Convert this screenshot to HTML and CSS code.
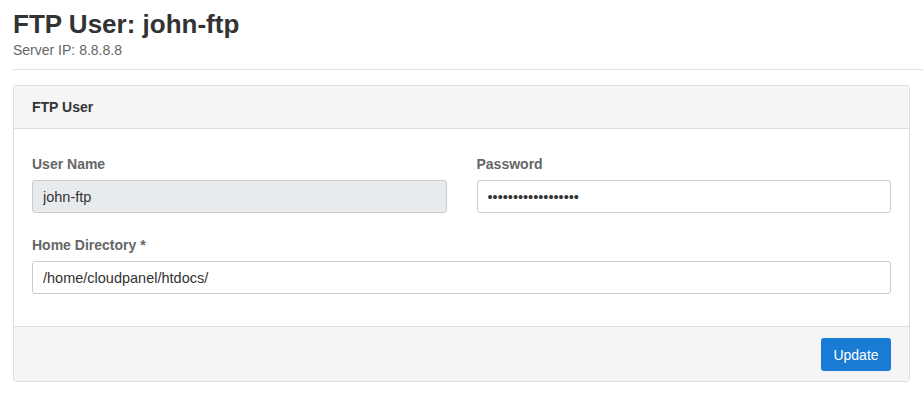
FILE: index.html
```html
<!DOCTYPE html>
<html lang="en">

<head>
    <meta charset="UTF-8">
    <meta name="viewport" content="width=device-width, initial-scale=1.0">
    <title>FTP User: john-ftp</title>
    <link rel="stylesheet" href="styles.css">
</head>

<body>
    <!-- Page Header -->
    <header class="page-header">
        <h1>FTP User: john-ftp</h1>
        <div class="subtitle">Server IP: 8.8.8.8</div>
    </header>

    <!-- FTP User Card -->
    <form class="card">
        <div class="card-header">FTP User</div>

        <div class="card-body">
            <div class="form-row">
                <div class="form-group">
                    <label for="user-name">User Name</label>
                    <input type="text" id="user-name" value="john-ftp" readonly>
                </div>
                <div class="form-group">
                    <label for="password">Password</label>
                    <input type="password" id="password" value="supersecretpasswds">
                </div>
            </div>

            <div class="form-group">
                <label for="home-dir">Home Directory *</label>
                <input type="text" id="home-dir" value="/home/cloudpanel/htdocs/">
            </div>
        </div>

        <div class="card-footer">
            <button type="button" class="primary">Update</button>
        </div>
    </form>
</body>

</html>
```

FILE: styles.css
```css
/* General Styles */
body {
    font-family: 'Liberation Sans', Arial, sans-serif;
    margin: 0;
    padding: 0 13px;
    background-color: #ffffff;
    color: #333333;
}

/* Page Header */
.page-header {
    padding-top: 10px;
    padding-bottom: 11px;
    border-bottom: 1px solid #e3e3e3;
    margin-right: -13px;
}

.page-header h1 {
    font-size: 26px;
    font-weight: bold;
    margin: 0;
    line-height: 28px;
    color: #333333;
}

.page-header .subtitle {
    font-size: 14px;
    color: #666666;
    margin-top: 5px;
    line-height: 15px;
}

/* Card */
.card {
    display: block;
    width: 897px;
    box-sizing: border-box;
    margin-top: 15px;
    border: 1px solid #dddddd;
    border-radius: 3px;
}

.card-header {
    background-color: #f5f5f5;
    border-bottom: 1px solid #dddddd;
    font-size: 14px;
    font-weight: bold;
    color: #333333;
    padding: 0 18px;
    height: 42px;
    line-height: 42px;
}

.card-body {
    padding: 26px 18px 32px;
}

.form-row {
    display: flex;
    gap: 30px;
}

.form-row .form-group {
    flex: 1;
}

.form-row + .form-group {
    margin-top: 23px;
}

label {
    display: block;
    font-size: 14px;
    font-weight: bold;
    color: #666666;
    line-height: 18px;
    margin-bottom: 7px;
}

/* Inputs */
input {
    display: block;
    width: 100%;
    box-sizing: border-box;
    height: 33px;
    padding: 0 10px;
    font-family: 'Liberation Sans', Arial, sans-serif;
    font-size: 14.5px;
    color: #333333;
    border: 1px solid #cccccc;
    border-radius: 3px;
    background-color: #ffffff;
    outline: none;
}

input[readonly] {
    background-color: #e8ebee;
}

/* Footer */
.card-footer {
    background-color: #f5f5f5;
    border-top: 1px solid #dddddd;
    padding: 11px 18px 10px;
    display: flex;
    justify-content: flex-end;
}

button.primary {
    height: 33px;
    width: 70px;
    padding: 0;
    font-family: 'Liberation Sans', Arial, sans-serif;
    font-size: 14px;
    color: #ffffff;
    background-color: #1a7bd4;
    border: none;
    border-radius: 3px;
    cursor: pointer;
}
```
